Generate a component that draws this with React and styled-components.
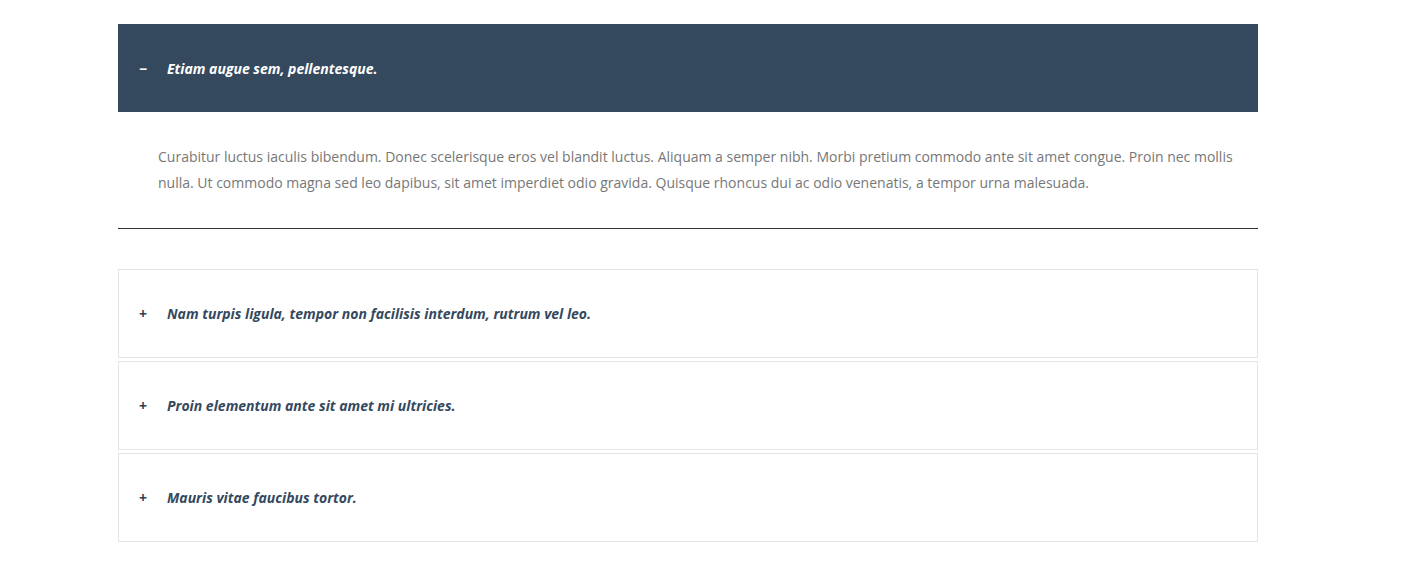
import React, { useState } from 'react';
import styled, { createGlobalStyle } from 'styled-components';

const GlobalStyle = createGlobalStyle`
  body {
    margin: 0;
    background: #fff;
    font-family: "Open Sans", "Liberation Sans", sans-serif;
  }
`;

const Page = styled.div`
  padding: 24px 0 30px 118px;
`;

const Accordion = styled.div`
  width: 1140px;
  display: flex;
  flex-direction: column;
`;

const Panel = styled.div`
  margin-bottom: ${p => (p.$open ? '40px' : '3px')};
  border: ${p => (p.$open ? 'none' : '1px solid #e5e5e5')};
  border-bottom: ${p => (p.$open ? '1px solid #333' : '1px solid #e5e5e5')};
`;

const Header = styled.div`
  display: flex;
  align-items: center;
  height: ${p => (p.$open ? '88px' : '87px')};
  padding-left: ${p => (p.$open ? '21px' : '20px')};
  background: ${p => (p.$open ? '#34495e' : '#fff')};
  color: ${p => (p.$open ? '#fff' : '#34495e')};
  cursor: pointer;
  box-sizing: border-box;
`;

const Sign = styled.span`
  width: 28px;
  font-size: 14px;
  font-weight: 700;
  color: ${p => (p.$open ? '#fff' : '#2c3e50')};
`;

const Title = styled.span`
  font-size: 14px;
  font-weight: 700;
  font-style: italic;
`;

const Body = styled.div`
  padding: 32px 20px 32px 40px;
  font-size: 14px;
  line-height: 26px;
  color: #777;
`;

const items = [
  {
    title: 'Etiam augue sem, pellentesque.',
    text: 'Curabitur luctus iaculis bibendum. Donec scelerisque eros vel blandit luctus. Aliquam a semper nibh. Morbi pretium commodo ante sit amet congue. Proin nec mollis nulla. Ut commodo magna sed leo dapibus, sit amet imperdiet odio gravida. Quisque rhoncus dui ac odio venenatis, a tempor urna malesuada.'
  },
  {
    title: 'Nam turpis ligula, tempor non facilisis interdum, rutrum vel leo.',
    text: 'Curabitur luctus iaculis bibendum. Donec scelerisque eros vel blandit luctus.'
  },
  {
    title: 'Proin elementum ante sit amet mi ultricies.',
    text: 'Aliquam a semper nibh. Morbi pretium commodo ante sit amet congue.'
  },
  {
    title: 'Mauris vitae faucibus tortor.',
    text: 'Quisque rhoncus dui ac odio venenatis, a tempor urna malesuada.'
  }
];

const App = () => {
  const [open, setOpen] = useState(0);

  return (
    <Page>
      <GlobalStyle />
      <Accordion>
        {items.map((item, i) => {
          const isOpen = open === i;
          return (
            <Panel key={i} $open={isOpen}>
              <Header $open={isOpen} onClick={() => setOpen(isOpen ? -1 : i)}>
                <Sign $open={isOpen}>{isOpen ? '−' : '+'}</Sign>
                <Title>{item.title}</Title>
              </Header>
              {isOpen && <Body>{item.text}</Body>}
            </Panel>
          );
        })}
      </Accordion>
    </Page>
  );
};

export default App;
